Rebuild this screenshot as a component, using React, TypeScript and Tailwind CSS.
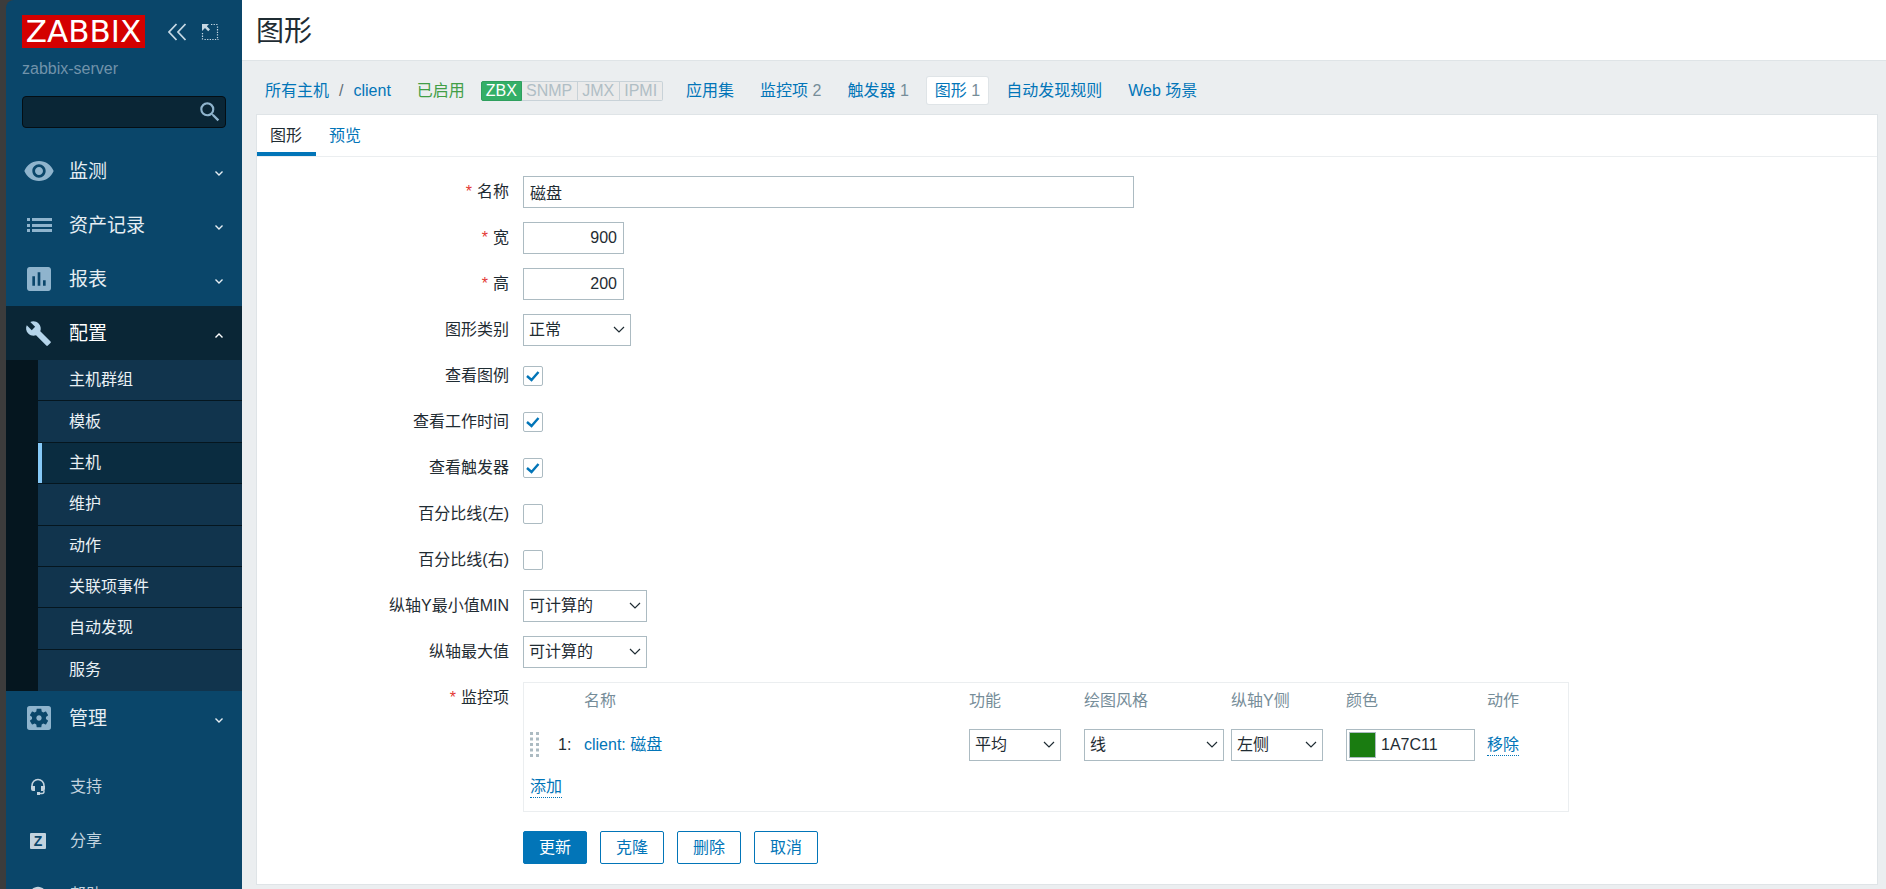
import { useState } from "react";
import type { ReactNode } from "react";
import {
    MdBuild,
    MdHelp,
    MdInsertChart,
    MdSearch,
    MdSettingsApplications,
    MdVisibility,
} from "react-icons/md";

const ListIcon = () => (
    <svg viewBox="0 0 32 32" className="size-8" fill="currentColor">
        <path d="M4 9h3v3H4zM9 9h20v3H9zM4 15h3v3H4zM9 15h20v3H9zM4 20h3v3H4zM9 20h20v3H9z" />
    </svg>
);

const HeadsetIcon = () => (
    <svg viewBox="0 0 16 18" className="w-4 h-[18px]" fill="none" stroke="currentColor">
        <path d="M2 9V7.5a6 6 0 0 1 12 0V9" strokeWidth="1.6" />
        <path d="M14 12.5v1a2 2 0 0 1-2 2H9" strokeWidth="1.4" />
        <path d="M1 8h4v5H3a2 2 0 0 1-2-2zM11 8h4v3a2 2 0 0 1-2 2h-2zM7 14h3v3H7z" fill="currentColor" stroke="none" />
    </svg>
);

const ShareIcon = () => (
    <span className="flex size-4 items-center justify-center rounded-[1px] bg-[#c3d3de] text-sm leading-4 font-bold text-[#0a466a]">
        Z
    </span>
);

const Chevron = ({ up = false }: { up?: boolean }) => (
    <svg viewBox="0 0 8 5" className="w-2 h-[5px]" fill="none" stroke="currentColor" strokeWidth="1.4">
        <path d={up ? "M.5 4.500L4 1l3.500 3.500" : "M.5 .5L4 4 7.500 .5"} />
    </svg>
);

const mainMenu = [
    { label: "监测", icon: <MdVisibility className="size-8" /> },
    { label: "资产记录", icon: <ListIcon /> },
    { label: "报表", icon: <MdInsertChart className="size-8" /> },
];

const configMenu = ["主机群组", "模板", "主机", "维护", "动作", "关联项事件", "自动发现", "服务"];

const supportMenu = [
    { label: "支持", icon: <HeadsetIcon /> },
    { label: "分享", icon: <ShareIcon /> },
    { label: "帮助", icon: <MdHelp className="size-5" /> },
];

const interfaces = ["SNMP", "JMX", "IPMI"];

const hostTabs = [
    { label: "应用集" },
    { label: "监控项", count: 2 },
    { label: "触发器", count: 1 },
    { label: "图形", count: 1, active: true },
    { label: "自动发现规则" },
    { label: "Web 场景" },
];

type MenuItemProps = { label: string; icon: ReactNode; open?: boolean };

const MenuItem = ({ label, icon, open = false }: MenuItemProps) => (
    <a
        href="#"
        className={`flex h-[54px] items-center px-4 text-[19px] ${open ? "bg-[#0a2636] text-white" : "text-[#e6eef3]"}`}
    >
        <span className={`flex w-[33px] justify-center ${open ? "text-[#b4d4ea]" : "text-[#8fb4cd]"}`}>{icon}</span>
        <span className="ml-3.5 flex-1 pt-0.5">{label}</span>
        <span className="mr-[3px] pt-1">
            <Chevron up={open} />
        </span>
    </a>
);

const Sidebar = () => (
    <aside className="flex w-[236px] h-screen shrink-0 flex-col overflow-hidden rounded-tl-lg bg-[#0a466a]">
        <div className="flex shrink-0 items-center px-4 pt-[15px] text-[#c6d8e4]">
            <a href="#" className="flex h-[33px] w-[123px] items-center justify-center bg-[#d40000] font-['DejaVu_Sans'] text-[31px] leading-none text-white">
                ZABBIX
            </a>
            <button aria-label="收起侧边栏" className="ml-[22px]">
                <svg viewBox="0 0 20 18" className="w-5 h-[18px]" fill="none" stroke="currentColor" strokeWidth="1.8">
                    <path d="M9.500 1L2 9l7.500 8M18.500 1L11 9l7.500 8" />
                </svg>
            </button>
            <button aria-label="隐藏侧边栏" className="ml-3.5">
                <svg viewBox="0 0 18 18" className="size-[18px]" fill="none" stroke="currentColor">
                    <path d="M10 1.500h7M16.500 3.500V16M1.500 10v7M3.500 16.500h14" strokeWidth="1.2" strokeDasharray="1.300 1.300" />
                    <path d="M1 1h7L5.800 3.200l3.200 3.200-1.800 1.800L4 5 1 8z" fill="currentColor" stroke="none" />
                </svg>
            </button>
        </div>
        <div className="shrink-0 px-4 pt-[9px] text-base leading-6 text-[#7193aa]">zabbix-server</div>

        <form className="mx-4 mt-[15px] flex h-8 shrink-0 items-center rounded-sm border border-[#040e14] bg-[#0a2636] pr-0.5">
            <input aria-label="搜索" type="text" className="min-w-0 flex-1 bg-transparent px-2 text-white outline-none" />
            <button type="button" aria-label="搜索" className="text-[#8fb4cd]">
                <MdSearch className="size-[26px]" />
            </button>
        </form>

        <nav className="mt-4 shrink-0">
            {mainMenu.map((item) => (
                <MenuItem key={item.label} label={item.label} icon={item.icon} />
            ))}
            <MenuItem label="配置" icon={<MdBuild className="size-[27px]" />} open />
            <ul className="grid min-h-[331px] auto-rows-fr bg-[#05161f] pl-8">
                {configMenu.map((label) => (
                    <li key={label} className="border-b border-[#05161f] last:border-b-0">
                        <a
                            href="#"
                            className={`flex h-full items-center border-l-4 pl-[27px] text-base text-[#eaf1f5] ${label === "主机" ? "border-[#86c9f7] bg-[#0a2c40]" : "border-[#11344d] bg-[#11344d]"}`}
                        >
                            {label}
                        </a>
                    </li>
                ))}
            </ul>
            <MenuItem label="管理" icon={<MdSettingsApplications className="size-8" />} />
        </nav>

        <nav className="mt-[15px] shrink-0">
            {supportMenu.map((item) => (
                <a key={item.label} href="#" className="flex h-[54px] items-center pl-4 text-base text-[#c3d3de]">
                    <span className="flex w-8 justify-center">{item.icon}</span>
                    <span className="ml-4">{item.label}</span>
                </a>
            ))}
        </nav>
    </aside>
);

const HostNav = () => (
    <div className="flex h-[53px] items-center whitespace-nowrap px-[23px] pt-1.5">
        <a href="#" className="text-[#0275b8]">所有主机</a>
        <span className="mx-2.5 text-[#5f6d76]">/</span>
        <a href="#" className="text-[#0275b8]">client</a>
        <span className="ml-[26px] text-[#429e47]">已启用</span>
        <div className="ml-4 mr-[15px] flex leading-[18px]">
            <span className="rounded-l-xs border border-[#2f9f5e] bg-[#34af67] px-1 text-white">ZBX</span>
            {interfaces.map((name) => (
                <span key={name} className="border border-l-0 border-[#c8d2d8] bg-[#ebebeb] pl-1 pr-[5px] text-[#b0bec5] last:rounded-r-xs">
                    {name}
                </span>
            ))}
        </div>
        <div className="flex gap-2.5">
            {hostTabs.map((tab) => (
                <a
                    key={tab.label}
                    href="#"
                    className={`rounded-xs px-2 leading-[27px] text-[#0275b8] ${tab.active ? "bg-white shadow-[0_0_0_1px_#dfe4e7]" : ""}`}
                >
                    {tab.label}
                    {tab.count && <span className="text-[#768d99]"> {tab.count}</span>}
                </a>
            ))}
        </div>
    </div>
);

type RowProps = { label: string; htmlFor?: string; required?: boolean; children: ReactNode };

const Row = ({ label, htmlFor, required, children }: RowProps) => (
    <div className="flex min-h-8">
        <label htmlFor={htmlFor} className="w-[252px] shrink-0 pr-3.5 text-right leading-8">
            {required && <span className="mr-[5px] text-[#e33734]">*</span>}
            {label}
        </label>
        <div className="flex min-w-0 flex-1 items-center">{children}</div>
    </div>
);

type SelectProps = { id?: string; label?: string; value: string; width: string };

const Select = ({ id, label, value, width }: SelectProps) => (
    <div className={`relative ${width}`}>
        <select
            id={id}
            aria-label={label}
            className="block h-8 w-full appearance-none border border-[#acbbc2] bg-white pl-[5px] text-[#1f2c33]"
        >
            <option>{value}</option>
        </select>
        <svg
            viewBox="0 0 12 8"
            className="pointer-events-none absolute right-1.5 top-3 w-3 h-2"
            fill="none"
            stroke="#1f2c33"
            strokeWidth="1.2"
        >
            <path d="M1 1l5 5 5-5" />
        </svg>
    </div>
);

const Checkbox = ({ id, defaultChecked = false }: { id: string; defaultChecked?: boolean }) => (
    <span className="grid size-5">
        <input
            id={id}
            type="checkbox"
            defaultChecked={defaultChecked}
            className="peer col-start-1 row-start-1 size-5 appearance-none rounded-xs border border-[#acbbc2] bg-white"
        />
        <svg
            viewBox="0 0 20 20"
            className="pointer-events-none invisible col-start-1 row-start-1 size-5 peer-checked:visible"
            fill="none"
            stroke="#0275b8"
            strokeWidth="2.4"
        >
            <path d="M4 10l4.500 4L15.500 6" />
        </svg>
    </span>
);

const DragHandle = () => (
    <svg viewBox="0 0 10 26" className="block w-2.5 h-[26px]" fill="#acbbc2">
        {[0, 1, 2, 3, 4].map((i) => (
            <path key={i} d={`M0 ${i * 5.5}h3v3H0zM6 ${i * 5.5}h3v3H6z`} />
        ))}
    </svg>
);

const ItemsTable = () => (
    <div className="w-full max-w-[1046px] border border-[#ebeef0] pb-3">
        <table className="w-full table-fixed text-left [&_td]:p-0 [&_td]:pl-1.5 [&_th]:p-0 [&_th]:pl-1.5">
            <colgroup>
                <col className="w-7" />
                <col className="w-[26px]" />
                <col />
                <col className="w-[115px]" />
                <col className="w-[147px]" />
                <col className="w-[115px]" />
                <col className="w-[141px]" />
                <col className="w-[87px]" />
            </colgroup>
            <thead>
                <tr className="h-9 text-[#768d99] [&>th]:font-normal">
                    <th />
                    <th />
                    <th>名称</th>
                    <th>功能</th>
                    <th>绘图风格</th>
                    <th>纵轴Y侧</th>
                    <th>颜色</th>
                    <th>动作</th>
                </tr>
            </thead>
            <tbody>
                <tr className="h-[52px]">
                    <td><DragHandle /></td>
                    <td className="whitespace-nowrap">1:</td>
                    <td><a href="#" className="text-[#0275b8]">client: 磁盘</a></td>
                    <td><Select label="功能" value="平均" width="w-[92px]" /></td>
                    <td><Select label="绘图风格" value="线" width="w-[140px]" /></td>
                    <td><Select label="纵轴Y侧" value="左侧" width="w-[92px]" /></td>
                    <td>
                        <div className="flex h-8 w-[129px] items-center border border-[#acbbc2] pl-0.5">
                            <button type="button" aria-label="选择颜色" className="h-[26px] w-[27px] shrink-0 border border-[#acbbc2] bg-[#1a7c11]" />
                            <input aria-label="颜色" defaultValue="1A7C11" className="min-w-0 flex-1 pl-[5px] outline-none" />
                        </div>
                    </td>
                    <td>
                        <button type="button" className="border-b border-dotted border-[#0275b8] leading-5 text-[#0275b8]">移除</button>
                    </td>
                </tr>
            </tbody>
        </table>
        <div className="pl-1.5 pt-1">
            <button type="button" className="border-b border-dotted border-[#0275b8] leading-5 text-[#0275b8]">添加</button>
        </div>
    </div>
);

const App = () => {
    const [tab, setTab] = useState("图形");

    const inputClass = "h-8 border border-[#acbbc2] bg-white px-1.5 text-[#1f2c33] outline-none";
    const buttonClass = "h-[33px] w-16 rounded-xs border border-[#0275b8]";

    return (
        <div className="flex min-h-screen bg-[#3c3c3c] pl-1.5 font-['Liberation_Sans','Noto_Sans_CJK_SC',sans-serif] text-base text-[#1f2c33]">
            <Sidebar />
            <main className="min-w-0 flex-1 bg-[#ebeef0]">
                <header className="flex h-[61px] items-center border-b border-[#dfe4e7] bg-white px-3.5 pt-1">
                    <h1 className="text-[28px]">图形</h1>
                </header>
                <HostNav />

                <section className="ml-3.5 mr-2 border border-[#dfe4e7] bg-white">
                    <div className="flex border-b border-[#ebeef0]">
                        {["图形", "预览"].map((name) => (
                            <button
                                key={name}
                                onClick={() => setTab(name)}
                                className={`h-[41px] border-b-4 pl-[13px] pr-3.5 pt-1 ${tab === name ? "border-[#0275b8]" : "border-transparent text-[#0275b8]"}`}
                            >
                                {name}
                            </button>
                        ))}
                    </div>

                    <form className="flex flex-col gap-3.5 px-3.5 pb-5 pt-[19px]">
                        <Row label="名称" htmlFor="name" required>
                            <input id="name" defaultValue="磁盘" className={`${inputClass} w-[611px]`} />
                        </Row>
                        <Row label="宽" htmlFor="width" required>
                            <input id="width" defaultValue="900" className={`${inputClass} w-[101px] text-right`} />
                        </Row>
                        <Row label="高" htmlFor="height" required>
                            <input id="height" defaultValue="200" className={`${inputClass} w-[101px] text-right`} />
                        </Row>
                        <Row label="图形类别" htmlFor="graphtype">
                            <Select id="graphtype" value="正常" width="w-[108px]" />
                        </Row>
                        <Row label="查看图例" htmlFor="legend">
                            <Checkbox id="legend" defaultChecked />
                        </Row>
                        <Row label="查看工作时间" htmlFor="worktime">
                            <Checkbox id="worktime" defaultChecked />
                        </Row>
                        <Row label="查看触发器" htmlFor="triggers">
                            <Checkbox id="triggers" defaultChecked />
                        </Row>
                        <Row label="百分比线(左)" htmlFor="percent_left">
                            <Checkbox id="percent_left" />
                        </Row>
                        <Row label="百分比线(右)" htmlFor="percent_right">
                            <Checkbox id="percent_right" />
                        </Row>
                        <Row label="纵轴Y最小值MIN" htmlFor="ymin">
                            <Select id="ymin" value="可计算的" width="w-[124px]" />
                        </Row>
                        <Row label="纵轴最大值" htmlFor="ymax">
                            <Select id="ymax" value="可计算的" width="w-[124px]" />
                        </Row>
                        <Row label="监控项" required>
                            <ItemsTable />
                        </Row>
                        <div className="flex gap-[13px] pl-[252px] pt-[5px]">
                            <button type="button" className={`${buttonClass} bg-[#0275b8] text-white`}>更新</button>
                            <button type="button" className={`${buttonClass} text-[#0275b8]`}>克隆</button>
                            <button type="button" className={`${buttonClass} text-[#0275b8]`}>删除</button>
                            <button type="button" className={`${buttonClass} text-[#0275b8]`}>取消</button>
                        </div>
                    </form>
                </section>
            </main>
        </div>
    );
};

export default App;
